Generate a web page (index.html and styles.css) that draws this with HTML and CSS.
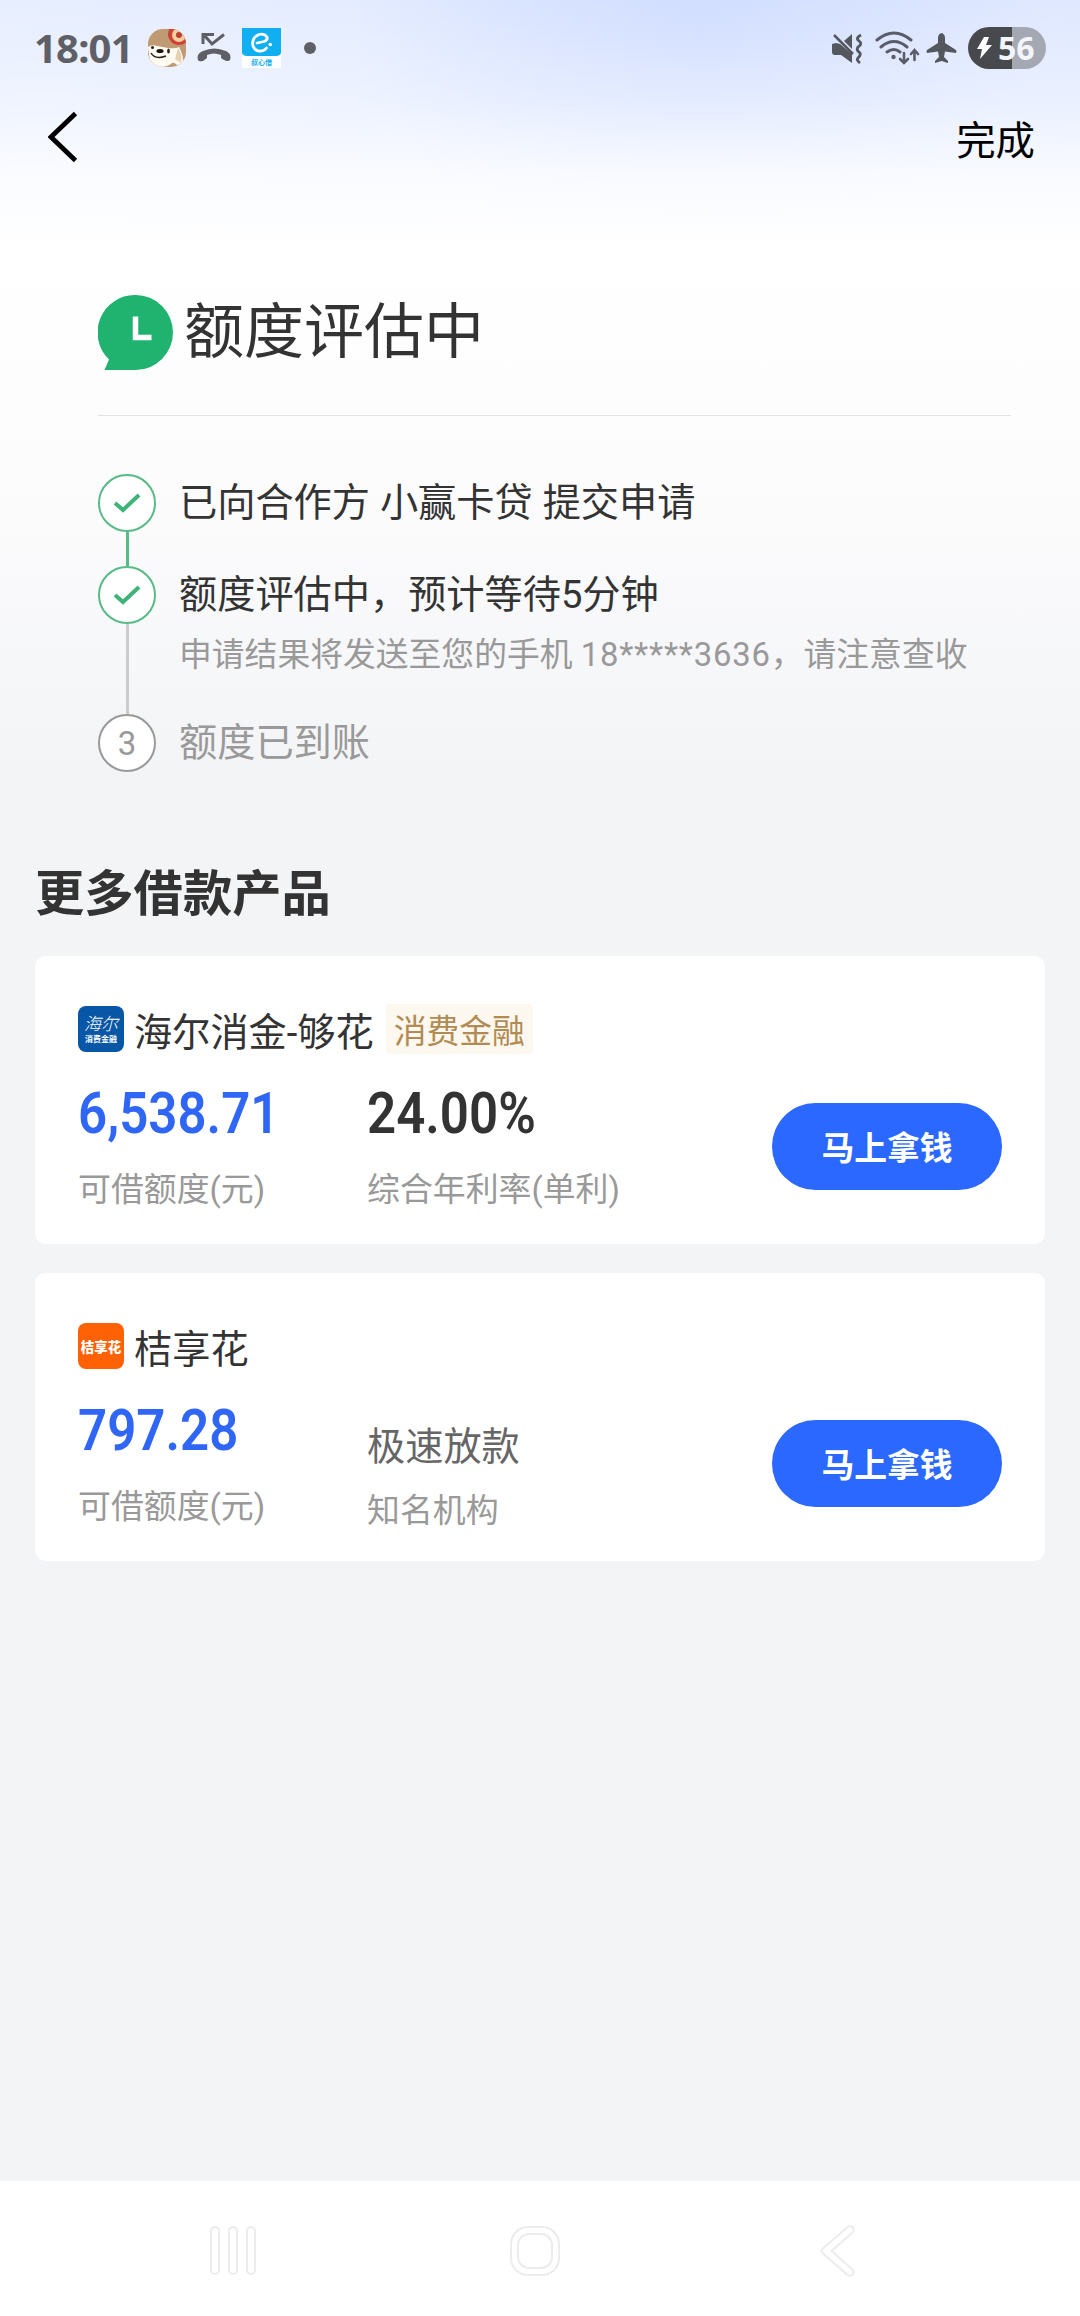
FILE: index.html
```html
<!DOCTYPE html>
<html lang="zh-CN">
<head>
<meta charset="utf-8">
<title>额度评估中</title>
<link rel="stylesheet" href="styles.css">
</head>
<body>
<div class="screen">
  <div class="status">
    <span class="clock">18:01</span>
    <svg class="dog" width="38" height="38" viewBox="0 0 38 38">
      <defs><clipPath id="dogclip"><rect width="38" height="38" rx="15"/></clipPath></defs>
      <g clip-path="url(#dogclip)">
        <rect width="38" height="38" fill="#bf9a73"/>
        <circle cx="31" cy="5" r="11" fill="#cf4036"/>
        <circle cx="31" cy="6" r="7" fill="#f3cf9f"/>
        <circle cx="31" cy="6" r="3" fill="#b8402f"/>
        <path d="M0 18Q4 15 9 17L20 19Q28 20 31 18Q36 27 35 35L29 36Q26 33 24 34Q20 38 12 38Q2 36 1 26Z" fill="#fffaf2"/>
        <path d="M30 19Q35 26 33 34L27 30Z" fill="#e8cfae"/>
        <path d="M3 24Q7 31 18 27" fill="none" stroke="#28231f" stroke-width="1.500"/>
        <ellipse cx="12" cy="22" rx="3.600" ry="2" fill="#181512"/>
        <circle cx="4.500" cy="18.500" r="1.500" fill="#28231f"/>
        <ellipse cx="20.500" cy="22" rx="1.400" ry="2.500" fill="#28231f"/>
      </g>
    </svg>
    <svg class="missed" width="34" height="32" viewBox="0 0 34 32" fill="none" stroke="#5f6067" stroke-width="3">
      <path d="M6 12V2.500H17M7 3L15 12L27 2.500" />
      <path d="M1 28Q-1 22 6 19Q17 14 29 19Q35 22 33 28Q31 30 27 28L24 26V23Q17 20 10 23V26L6 29Q2 30 1 28Z" fill="#5f6067" stroke="none"/>
    </svg>
    <span class="app">
      <svg width="39" height="29" viewBox="0 0 39 29">
        <path d="M0 0H39V25Q38 28 34 28H5Q1 28 0 25Z" fill="#10aff2"/>
        <path d="M15 15L22 13.500Q26 12 25 9Q22 5 17 6.500Q11 9 10.500 15Q11 22 17 23.200Q22 23.500 24.500 20" fill="none" stroke="#fff" stroke-width="2.800" stroke-linecap="round" stroke-linejoin="round"/>
        <circle cx="28.300" cy="16.500" r="1.800" fill="#fff"/>
      </svg>
      <span class="app-name">叔心借</span>
    </span>
    <span class="dot"></span>
    <span class="grow"></span>
    <svg class="mute" width="30" height="31" viewBox="0 0 30 31">
      <path d="M0 11L4 10L8 11L20 21V30L9 22H3Q0 22 0 19Z" fill="#55575e"/>
      <path d="M12 8L20 1V16Z" fill="#55575e"/>
      <path d="M2 2L21 21" stroke="#55575e" stroke-width="2.500"/>
      <path d="M29 2Q23 5 27 8T26 14Q24 17 27 19T26 25Q24 27 28 30" fill="none" stroke="#55575e" stroke-width="2.800"/>
    </svg>
    <svg class="wifi" width="45" height="34" viewBox="0 0 45 34" fill="none" stroke="#5a5d68" stroke-width="3" stroke-linecap="round">
      <path d="M2 9Q19-5 36 9M6 16Q19 5 32 16M12 21Q19 16 25 21"/>
      <circle cx="18.500" cy="26" r="2.200" fill="#5a5d68" stroke="none"/>
      <path d="M29 22V32M25 28L29 32L33 28M39.500 29V19M36 23L39.500 19L43 23" stroke-width="2.600"/>
    </svg>
    <svg class="plane" width="31" height="30" viewBox="0 0 31 30">
      <path d="M15.500 0Q19 1 19 5V10L30 17Q31 19 30 20L19 18.500L18 24L22 28V30L15.500 28L9 30V28L13 24L12 18.500L1 20Q0 18 1 17L12 10V5Q12 1 15.500 0Z" fill="#55575e"/>
    </svg>
    <span class="battery">
      <svg width="15" height="22" viewBox="0 0 15 22"><path d="M7 0H12L9 8H15L3 22L5 12H0Z" fill="#fff"/></svg>
      <span>56</span>
    </span>
  </div>

  <div class="header">
    <svg width="30" height="52" viewBox="0 0 30 52"><path d="M27.500 2.500L3 26L27.500 49.500" fill="none" stroke="#000" stroke-width="4.800"/></svg>
    <span class="done">完成</span>
  </div>

  <div class="hero">
    <div class="hero-title">
      <svg width="75" height="75" viewBox="0 0 75 75">
        <path d="M37.500 0A37.500 37.500 0 0 1 37.500 75H6.500L11 64.500A37.500 37.500 0 0 1 37.500 0Z" fill="#20b26f"/>
        <path d="M37.500 21.500V42.500H53.500" fill="none" stroke="#fff" stroke-width="5.500"/>
      </svg>
      <h1>额度评估中</h1>
    </div>
    <div class="steps">
      <div class="step">
        <div class="rail">
          <span class="mark ok"><svg width="28" height="22" viewBox="0 0 28 22"><path d="M2 11L10 18L26 3" fill="none" stroke="#3fb477" stroke-width="4"/></svg></span>
          <span class="line green"></span>
        </div>
        <div class="text"><p class="name">已向合作方 小赢卡贷 提交申请</p></div>
      </div>
      <div class="step tall">
        <div class="rail">
          <span class="mark ok"><svg width="28" height="22" viewBox="0 0 28 22"><path d="M2 11L10 18L26 3" fill="none" stroke="#3fb477" stroke-width="4"/></svg></span>
          <span class="line"></span>
        </div>
        <div class="text">
          <p class="name">额度评估中，预计等待5分钟</p>
          <p class="note">申请结果将发送至您的手机 <span class="phone">18*****3636</span>，请注意查收</p>
        </div>
      </div>
      <div class="step last">
        <div class="rail"><span class="mark">3</span></div>
        <div class="text"><p class="name muted">额度已到账</p></div>
      </div>
    </div>
  </div>

  <div class="products">
    <h2>更多借款产品</h2>
    <div class="card">
      <div class="card-head">
        <span class="logo haier"><span class="script">海尔</span><span class="tiny">消费金融</span></span>
        <span class="brand">海尔消金-够花</span>
        <span class="tag">消费金融</span>
      </div>
      <div class="card-body">
        <div class="cell"><p class="amount blue">6,538.71</p><p class="label">可借额度(元)</p></div>
        <div class="cell"><p class="amount">24.00%</p><p class="label">综合年利率(单利)</p></div>
        <span class="button">马上拿钱</span>
      </div>
    </div>
    <div class="card">
      <div class="card-head">
        <span class="logo jie">桔享花</span>
        <span class="brand">桔享花</span>
      </div>
      <div class="card-body">
        <div class="cell"><p class="amount blue">797.28</p><p class="label">可借额度(元)</p></div>
        <div class="cell plain"><p class="feature">极速放款</p><p class="label">知名机构</p></div>
        <span class="button">马上拿钱</span>
      </div>
    </div>
  </div>

  <div class="nav">
    <svg width="46" height="50" viewBox="0 0 46 50" fill="#fff" stroke="#ececec" stroke-width="2">
      <rect x="1" y="1" width="8" height="47" rx="4"/><rect x="19" y="1" width="8" height="47" rx="4"/><rect x="37" y="1" width="8" height="47" rx="4"/>
    </svg>
    <svg width="50" height="50" viewBox="0 0 50 50" fill="none" stroke="#ececec" stroke-width="2">
      <rect x="1" y="1" width="48" height="48" rx="17"/><rect x="8" y="8" width="34" height="34" rx="11"/>
    </svg>
    <svg width="35" height="52" viewBox="0 0 35 52" fill="#fff" stroke="#ececec" stroke-width="2" stroke-linejoin="round">
      <path d="M27 2.500Q30 0 32.500 2Q35 4.500 32.500 7.500L11.500 26L32.500 44.500Q35 47.500 32.500 50Q30 52 27 49.500L3 28.500Q0 26 3 23.500Z"/>
    </svg>
  </div>
</div>
</body>
</html>
```
FILE: styles.css
```css
* { box-sizing: border-box; }
body {
  margin: 0;
  font-family: Roboto, "Noto Sans CJK SC", sans-serif;
  color: #333;
}
p, h1, h2 { margin: 0; font-weight: 400; white-space: nowrap; }
svg { display: block; flex: none; }

.screen {
  display: flex;
  flex-direction: column;
  width: 1080px;
  height: 2316px;
  background:
    linear-gradient(to bottom, rgba(255,255,255,0) 0, rgba(255,255,255,.35) 100px, rgba(255,255,255,.8) 175px, #fff 250px, rgba(255,255,255,0) 251px),
    radial-gradient(ellipse 350px 230px at 700px 30px, #d0ddff 0, rgba(208,221,255,.5) 55%, rgba(208,221,255,0) 100%) 0 0 / 1080px 250px no-repeat,
    linear-gradient(to right, #e7eeff, #dfe8ff) 0 0 / 1080px 250px no-repeat,
    linear-gradient(to bottom, #fff 250px, #fcfcfd 480px, #f3f4f6 780px);
}

.status {
  display: flex;
  align-items: center;
  height: 96px;
  padding: 0 34px 0 34px;
  color: #5f6067;
}
.clock {
  width: 114px;
  font: 700 40px/48px "Noto Sans", sans-serif;
  letter-spacing: -.8px;
}
.missed { margin-left: 11px; }
.app {
  display: flex;
  flex-direction: column;
  width: 39px;
  height: 40px;
  margin-left: 11px;
  background: #fff;
  overflow: hidden;
}
.app-name { font: 700 7px/10px "Noto Sans CJK SC", sans-serif; color: #10aff2; text-align: center; }
.dot { width: 12px; height: 12px; margin-left: 23px; border-radius: 50%; background: #5f6067; }
.grow { flex: 1; }
.wifi { margin-left: 13px; }
.plane { margin-left: 6px; }
.battery {
  display: flex;
  align-items: center;
  gap: 6px;
  width: 78px;
  height: 42px;
  margin-left: 11px;
  padding-left: 9px;
  border-radius: 21px;
  background: linear-gradient(to right, #48494d 44px, #a4a8b3 44px);
  color: #f4f5fa;
  font: 700 32px/42px "Noto Sans", sans-serif;
}

.header {
  display: flex;
  align-items: center;
  justify-content: space-between;
  height: 82px;
  padding: 0 45px 0 48px;
}
.done { padding-top: 10px; font-size: 39.4px; line-height: 44px; color: #000; }

.hero { padding: 117px 69px 0 98px; }
.hero-title {
  display: flex;
  gap: 11px;
  height: 121px;
  border-bottom: 1px solid #e3e3e4;
}
.hero-title h1 { font-size: 60px; line-height: 76px; }

.steps { padding-top: 58px; }
.step { display: flex; gap: 23px; height: 92px; }
.step.tall { height: 148px; }
.step.last { height: 58px; }
.rail { display: flex; flex-direction: column; align-items: center; width: 58px; }
.mark {
  display: flex;
  align-items: center;
  justify-content: center;
  width: 58px;
  height: 58px;
  border: 2px solid #999;
  border-radius: 50%;
  background: #fff;
  color: #999;
  font-size: 33px;
}
.mark.ok { border-color: #58ba86; }
.line { flex: 1; width: 3px; background: #ccc; }
.line.green { background: #58ba86; }
.name { font-size: 38.2px; line-height: 59px; word-spacing: .5px; }
.name.muted { color: #999; }
.note { margin-top: 7px; font-size: 32.8px; line-height: 46px; color: #999; }
.phone { letter-spacing: .8px; }

.products { flex: 1; padding: 91px 35px 0; }
h2 { font-size: 49.3px; line-height: 63px; font-weight: 700; }
.card {
  height: 288px;
  margin-top: 29px;
  padding: 48px 43px 0;
  border-radius: 11px;
  background: #fff;
}
h2 + .card { margin-top: 30px; }
.card-head { display: flex; align-items: center; height: 50px; }
.logo {
  display: flex;
  flex-direction: column;
  align-items: center;
  justify-content: center;
  width: 46px;
  height: 46px;
  border-radius: 8px;
  color: #fff;
  white-space: nowrap;
}
.haier { background: #0757a6; }
.script { font: italic 300 17px/20px "Noto Sans CJK SC", sans-serif; }
.tiny { font: 700 8px/12px "Noto Sans CJK SC", sans-serif; }
.jie { background: #ff6104; font: 900 13.5px/20px "Noto Sans CJK SC", sans-serif; }
.brand { margin-left: 10px; padding-top: 8px; font-size: 38.2px; line-height: 46px; }
.tag {
  height: 50px;
  margin-left: 12px;
  padding: 0 8px;
  border-radius: 4px;
  background: #fcf7ef;
  color: #b18b51;
  font-size: 32.8px;
  line-height: 57px;
}
.card-body {
  display: grid;
  grid-template-columns: 289px 1fr 230px;
  align-items: start;
  padding-top: 24px;
}
.amount {
  width: max-content;
  font-size: 58px;
  font-weight: 600;
  line-height: 70px;
  transform: scaleX(.88);
  transform-origin: 0 50%;
}
.blue { color: #2f66f6; }
.label { margin-top: 20px; font-size: 32.9px; line-height: 44px; color: #999; }
.plain { padding-top: 27px; }
.feature { font-size: 38.2px; line-height: 50px; color: #666; }
.plain .label { margin-top: 17px; }
.button {
  height: 87px;
  margin-top: 25px;
  border-radius: 44px;
  background: #2b68ff;
  color: #fff;
  font-size: 32.8px;
  font-weight: 700;
  line-height: 93px;
  text-align: center;
}

.nav {
  display: grid;
  grid-template-columns: 300px 310px 1fr;
  align-items: center;
  height: 135px;
  padding: 4px 0 0 210px;
  background: #fff;
}
```
